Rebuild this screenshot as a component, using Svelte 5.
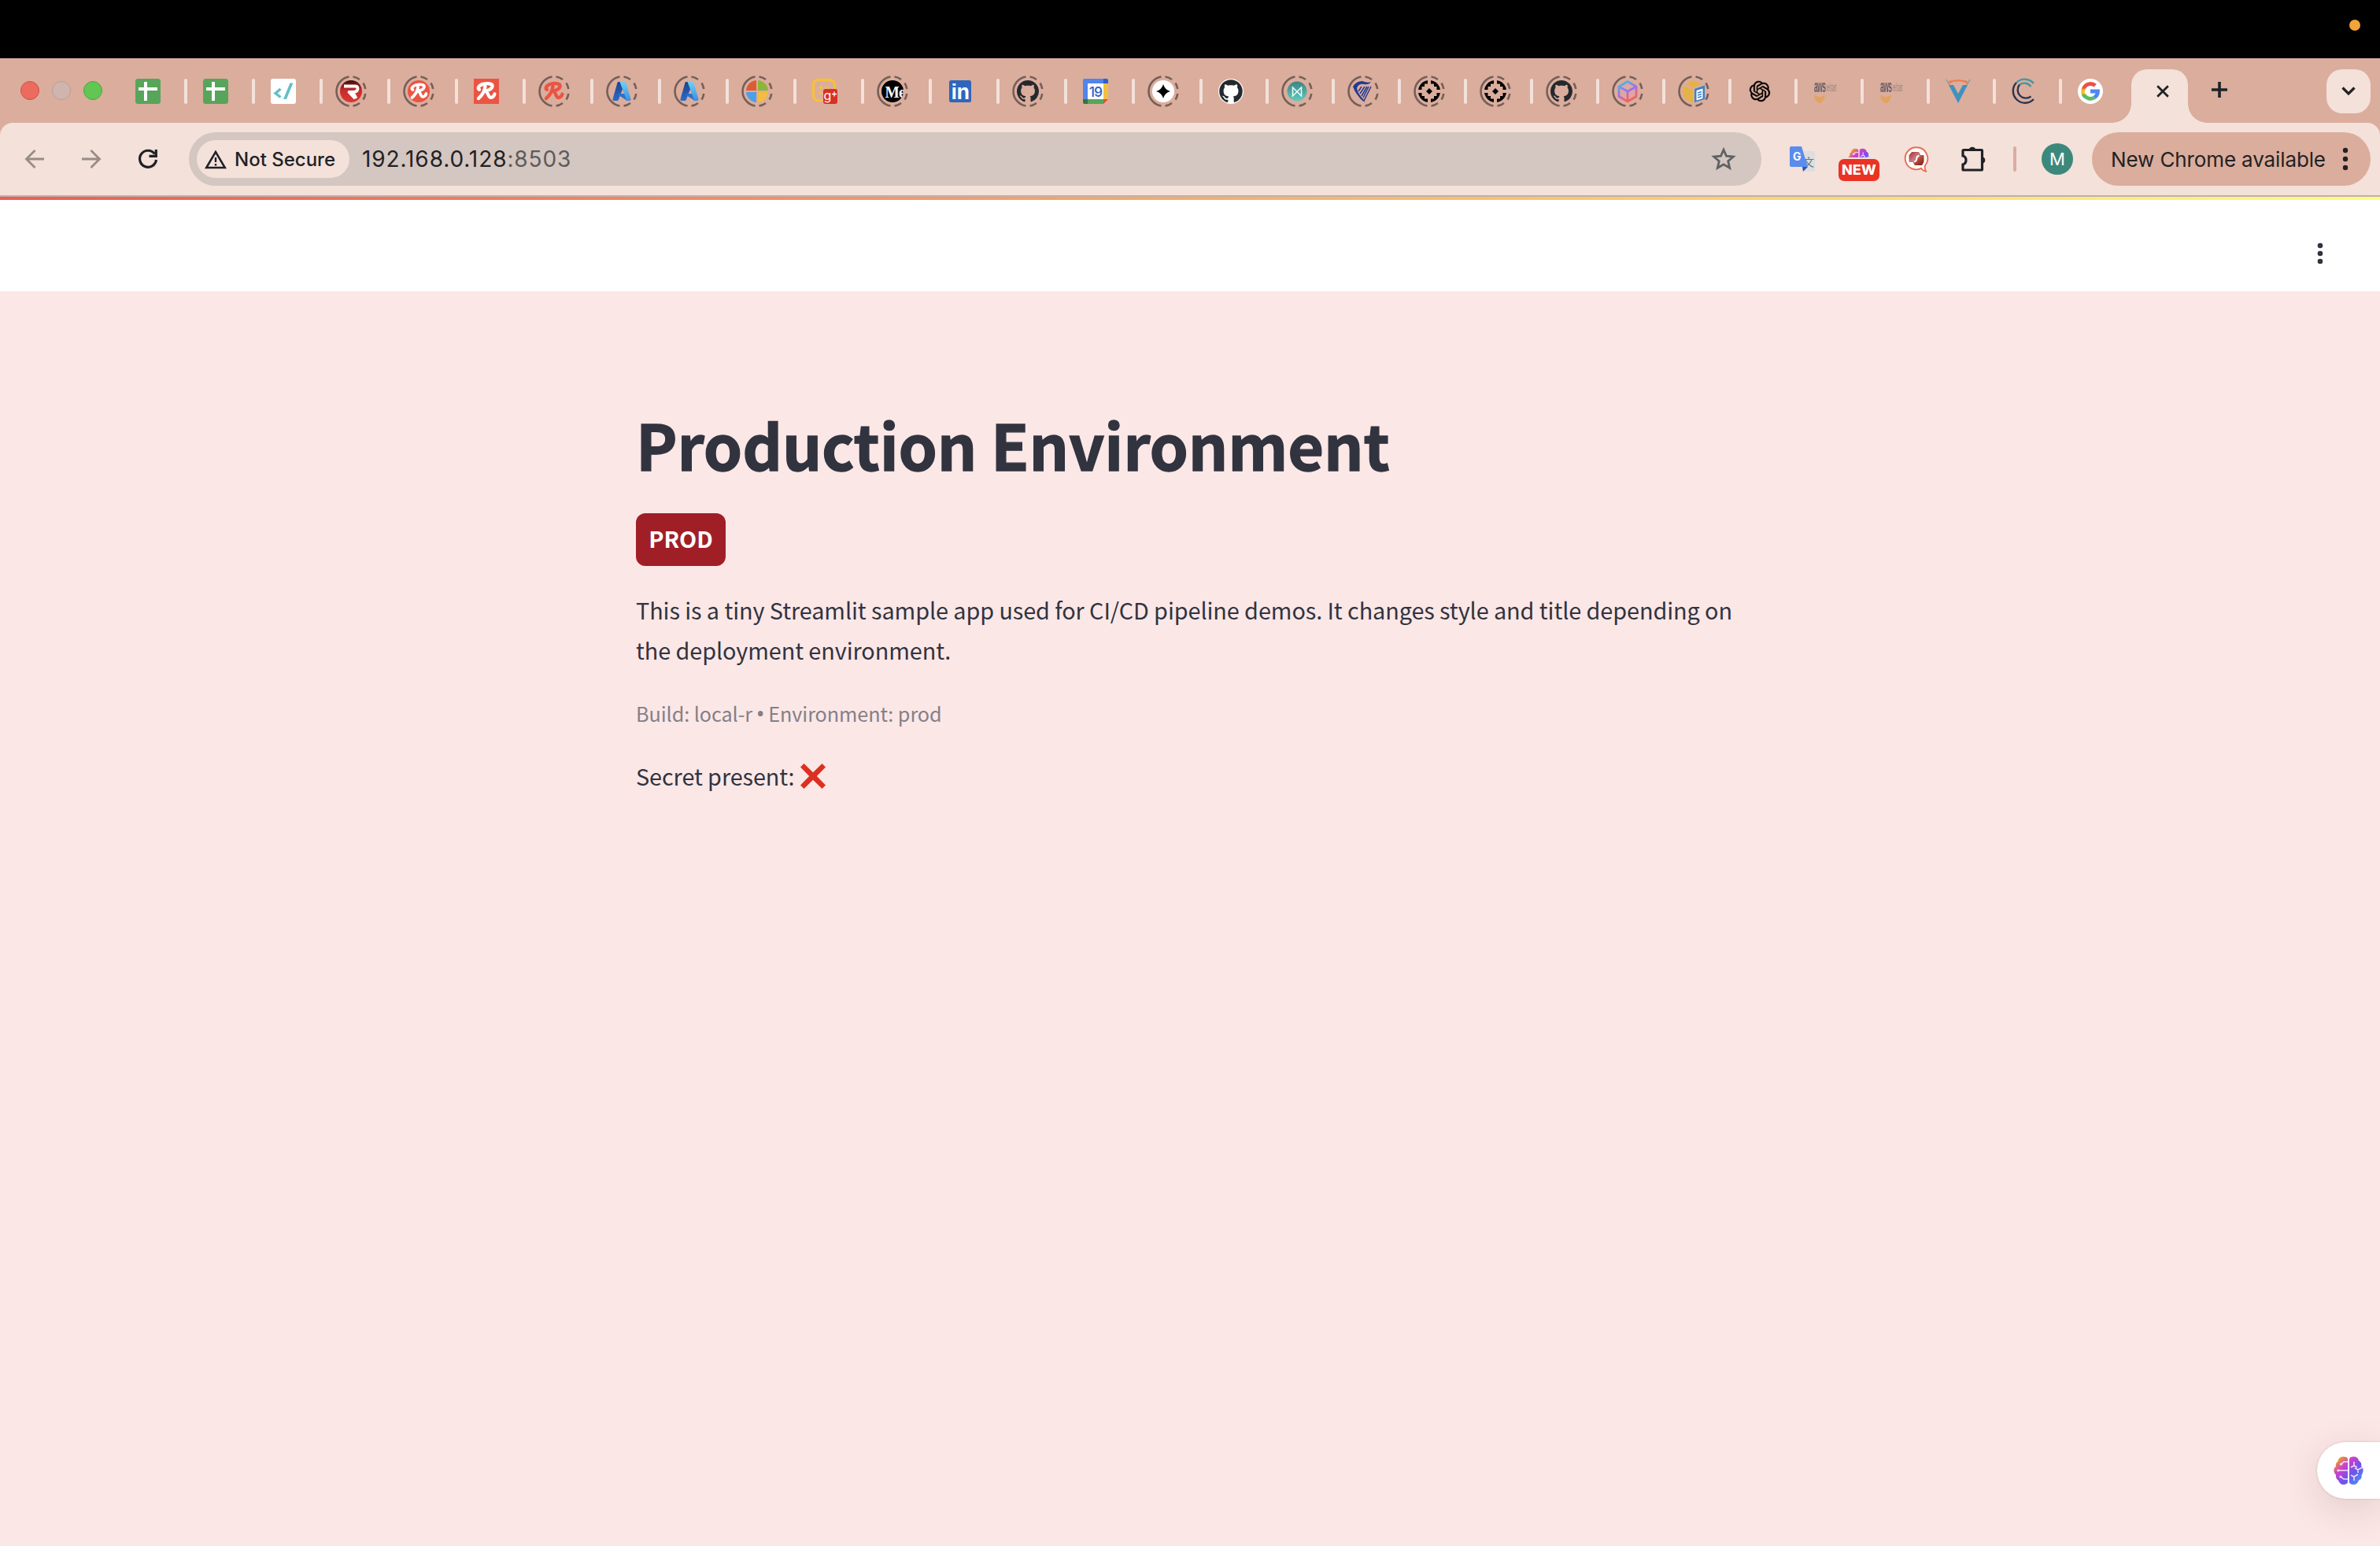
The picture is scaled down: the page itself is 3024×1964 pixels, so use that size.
<script>
  // Slots shrink by two pixels from the seventeenth tab onwards.
  const tabs = [
    ['sheets'], ['sheets'], ['code'], ['redr', 1], ['scriptCircle', 1], ['scriptSquare'],
    ['scriptPlain', 1], ['azure', 1], ['azure', 1], ['microsoft', 1], ['smile'], ['medium', 1],
    ['linkedin'], ['github', 1], ['calendar'], ['spark', 1], ['githubWhite'], ['teal', 1],
    ['harp', 1], ['target', 1], ['target', 1], ['github', 1], ['cube', 1], ['box', 1],
    ['openai'], ['aws'], ['aws'], ['vee'], ['cee'], ['google']
  ].map(([icon, ring], i) => ({ icon, ring, narrow: i > 15, last: i === 29 }));
  const octocat = 'M8 0C3.58 0 0 3.58 0 8c0 3.54 2.29 6.53 5.47 7.59.4.07.55-.17.55-.38 0-.19-.01-.82-.01-1.49-2.01.37-2.53-.49-2.69-.94-.09-.23-.48-.94-.82-1.13-.28-.15-.68-.52-.01-.53.63-.01 1.08.58 1.23.82.72 1.21 1.87.87 2.33.66.07-.52.28-.87.51-1.07-1.78-.2-3.64-.89-3.64-3.95 0-.87.31-1.59.82-2.15-.08-.2-.36-1.02.08-2.12 0 0 .67-.21 2.2.82.64-.18 1.32-.27 2-.27.68 0 1.36.09 2 .27 1.53-1.04 2.2-.82 2.2-.82.44 1.1.16 1.92.08 2.12.51.56.82 1.27.82 2.15 0 3.07-1.87 3.75-3.65 3.95.29.25.54.73.54 1.48 0 1.07-.01 1.93-.01 2.2 0 .21.15.46.55.38A8.013 8.013 0 0016 8c0-4.42-3.58-8-8-8z';
  const script = 'M12.500 18c-2.500-1-1-4.500 4-6 5.500-1.500 11-.5 10.500 2.500-.5 3-5 5-8.500 5 4 0 3.500 8 7 7.500 2-.5 3.500-2 4-4M19 14.500c-.5 5-3.500 10-7.500 13.500';
  const knot = 'M22.2819 9.8211a5.9847 5.9847 0 0 0-.5157-4.9108 6.0462 6.0462 0 0 0-6.5098-2.9A6.0651 6.0651 0 0 0 4.9807 4.1818a5.9847 5.9847 0 0 0-3.9977 2.9 6.0462 6.0462 0 0 0 .7427 7.0966 5.98 5.98 0 0 0 .511 4.9107 6.051 6.051 0 0 0 6.5146 2.9001A5.9847 5.9847 0 0 0 13.2599 24a6.0557 6.0557 0 0 0 5.7718-4.2058 5.9894 5.9894 0 0 0 3.9977-2.9001 6.0557 6.0557 0 0 0-.7475-7.0729zm-9.022 12.6081a4.4755 4.4755 0 0 1-2.8764-1.0408l.1419-.0804 4.7783-2.7582a.7948.7948 0 0 0 .3927-.6813v-6.7369l2.02 1.1686a.071.071 0 0 1 .038.052v5.5826a4.504 4.504 0 0 1-4.4945 4.4944zm-9.6607-4.1254a4.4708 4.4708 0 0 1-.5346-3.0137l.142.0852 4.783 2.7582a.7712.7712 0 0 0 .7806 0l5.8428-3.3685v2.3324a.0804.0804 0 0 1-.0332.0615L9.74 19.9502a4.4992 4.4992 0 0 1-6.1408-1.6464zM2.3408 7.8956a4.485 4.485 0 0 1 2.3655-1.9728V11.6a.7664.7664 0 0 0 .3879.6765l5.8144 3.3543-2.0201 1.1685a.0757.0757 0 0 1-.071 0l-4.8303-2.7865A4.504 4.504 0 0 1 2.3408 7.872zm16.5963 3.8558L13.1038 8.364 15.1192 7.2a.0757.0757 0 0 1 .071 0l4.8303 2.7913a4.4944 4.4944 0 0 1-.6765 8.1042v-5.6772a.79.79 0 0 0-.407-.667zm2.0107-3.0231l-.142-.0852-4.7735-2.7818a.7759.7759 0 0 0-.7854 0L9.409 9.2297V6.8974a.0662.0662 0 0 1 .0284-.0615l4.8303-2.7866a4.4992 4.4992 0 0 1 6.6802 4.66zM8.3065 12.863l-2.02-1.1638a.0804.0804 0 0 1-.038-.0567V6.0742a4.4992 4.4992 0 0 1 7.3757-3.4537l-.142.0805L8.704 5.459a.7948.7948 0 0 0-.3927.6813zm1.0976-2.3654l2.602-1.4998 2.6069 1.4998v2.9994l-2.5974 1.4997-2.6067-1.4997Z';
</script>

{#snippet brain(id)}
  <defs>
    <linearGradient id={id} x1="0" y1="0" x2="1" y2="1">
      <stop offset="0" stop-color="#f0a020" />
      <stop offset=".15" stop-color="#e8913f" />
      <stop offset=".35" stop-color="#cb3fd0" />
      <stop offset=".62" stop-color="#6a55ee" />
      <stop offset="1" stop-color="#3ea6f4" />
    </linearGradient>
  </defs>
  <path fill="url(#{id})" d="M18 3.5C18 1.5 15.500.5 12.500.5 8.500.5 6 3 5.500 6.500 3 8 2.500 11 3 13 .5 14.500 0 17 .5 19.500 1 22 2.500 23 3 23.500 2.500 27 4 29.500 6 30.500 7 34 9.500 36 12.500 36 16 36 18 34.500 18 33ZM20 3.500C20 1.500 22 .5 25 .5 29 .5 31.500 2.500 32 5.500 35 7 36 10 35 12.500 37.500 14.500 38.500 18 37 21 36.500 23 35.500 23.500 35.500 25 36 28 34 30 32 30.500 31 34 29 36 25.500 36 22 36 20 34.500 20 33Z" />
  <g fill="none" stroke="#f6dcff" stroke-width="1.500">
    <path d="M18 7h-5l-3 3M18 18H7M18 29h-5l-4-3M26 7v5m0 0-4 2m4-2 4 2M27 15l4 2m0 0v4m0-4 6-3M26 31v-5m0 0-4-2m4 2 5-3" />
  </g>
  <g fill="#f6dcff"><circle cx="9.500" cy="10" r="1.600" /><circle cx="6" cy="18" r="1.600" /><circle cx="9" cy="26" r="1.600" /></g>
{/snippet}

{#snippet favicon(kind)}
  {#if kind === 'sheets'}
    <rect x="4" y="4" width="32" height="32" rx="3.500" fill="#57a55a" />
    <path d="M8 17h24M17 8v24" stroke="#fff" stroke-width="4" />
  {:else if kind === 'code'}
    <rect x="4" y="4" width="32" height="32" rx="3" fill="#fff" />
    <path d="M16.500 17 10 22.500l6.500 5" fill="none" stroke="#63bfc6" stroke-width="3.400" />
    <path d="M20 30h4l8.500-20.500h-4z" fill="#63bfc6" />
  {:else if kind === 'redr'}
    <defs><linearGradient id="redr" x1="0" y1="0" x2="0" y2="1"><stop stop-color="#3a0d0d" /><stop offset=".45" stop-color="#c92a2b" /><stop offset="1" stop-color="#d83a36" /></linearGradient></defs>
    <circle cx="20" cy="20" r="14" fill="url(#redr)" />
    <path d="M11 13.500h14q3.500 0 3.500 3 0 4-5.500 4.500h-5.500l7.500 8M22.500 21.500l4 7.500" fill="none" stroke="#fff" stroke-width="3.800" stroke-linejoin="round" />
  {:else if kind === 'scriptCircle'}
    <circle cx="20" cy="20" r="14" fill="#eb5443" />
    <path class="ribbon" d={script} stroke="#fff" />
  {:else if kind === 'scriptSquare'}
    <rect x="4" y="4" width="32" height="32" fill="#eb5443" />
    <g transform="translate(-3.200 -2.800) scale(1.140)"><path class="ribbon" d={script} stroke="#fff" /></g>
  {:else if kind === 'scriptPlain'}
    <g transform="translate(-3.400 -3) scale(1.150)"><path class="ribbon" d={script} stroke="#eb5443" /></g>
  {:else if kind === 'azure'}
    <defs>
      <linearGradient id="az1" x1="0" y1="0" x2="0" y2="1"><stop stop-color="#1d4388" /><stop offset="1" stop-color="#2f6ac6" /></linearGradient>
      <linearGradient id="az2" x1="0" y1="0" x2="0" y2="1"><stop stop-color="#6fd0f6" /><stop offset="1" stop-color="#3f8ddd" /></linearGradient>
    </defs>
    <path d="M15.500 8h9L16 30.500q-.6 1.500-2 1.500H10q-2 0-1.500-2L14.500 9q.4-1 1-1z" fill="url(#az1)" />
    <path d="M15 23h9l3 9-11-7z" fill="#2a70d0" />
    <path d="M17.500 8h6.500q1.200 0 1.600 1.200L31.500 30q.5 2-1.500 2h-5q1-.8.5-2.300z" fill="url(#az2)" />
  {:else if kind === 'microsoft'}
    <path d="M19 6v13H6A14 14 0 0 1 19 6z" fill="#de5b34" />
    <path d="M21 6v13h13A14 14 0 0 0 21 6z" fill="#8bb638" />
    <path d="M19 34V21H6a14 14 0 0 0 13 13z" fill="#4ba1e8" />
    <path d="M21 34V21h13a14 14 0 0 1-13 13z" fill="#f5bb42" />
  {:else if kind === 'smile'}
    <rect x="5.500" y="5.500" width="27" height="26" rx="6" fill="none" stroke="#f5c03c" stroke-width="3.600" />
    <circle cx="15" cy="15" r="2.400" fill="#f5c03c" />
    <path d="M20 15.500h5M12 21q4 3 7 2" stroke="#f5c03c" stroke-width="2" fill="none" />
    <rect x="18" y="17" width="18" height="19" rx="3" fill="#d83024" />
    <text x="18.500" y="30.500" font-size="16" fill="#fff">g</text>
    <path d="M29 23.500h6M32 20.500v6" stroke="#fff" stroke-width="1.300" />
  {:else if kind === 'medium'}
    <clipPath id="disc"><circle cx="20" cy="20" r="14" /></clipPath>
    <circle cx="20" cy="20" r="14" fill="#000" />
    <g clip-path="url(#disc)"><g transform="translate(10.500 27.500) scale(.88 1)"><text font-size="22" font-weight="700" letter-spacing="-1" class="serif" fill="#fff">Me</text></g></g>
  {:else if kind === 'linkedin'}
    <rect x="6" y="6" width="28" height="28" rx="2.500" fill="#2e66bc" />
    <text x="8.500" y="30" font-size="27" font-weight="700" letter-spacing="-.5" class="sans" fill="#fff">in</text>
  {:else if kind === 'github'}
    <g transform="translate(6 6) scale(1.750)"><path d={octocat} fill="#24292e" /></g>
  {:else if kind === 'githubWhite'}
    <circle cx="20" cy="20" r="16" fill="#fff" />
    <g transform="translate(5.200 5.200) scale(1.850)"><path d={octocat} fill="#24292e" /></g>
  {:else if kind === 'calendar'}
    <path d="M6 4h24v6H10v20H4V6q0-2 2-2z" fill="#5184ec" />
    <path d="M30 4h4q2 0 2 2v4h-6z" fill="#2c60ca" />
    <path d="M30 10h6v20h-6z" fill="#f1bf42" />
    <path d="M10 30h20v6H10z" fill="#57a55b" />
    <path d="M4 30h6v6H6q-2 0-2-2z" fill="#33773c" />
    <path d="M30 30h6l-6 6z" fill="#d9503f" />
    <path d="M10 10h20v20H10z" fill="#fff" />
    <text x="20" y="26.500" font-size="17.500" font-weight="500" text-anchor="middle" letter-spacing="-.8" fill="#2c60ca">19</text>
  {:else if kind === 'spark'}
    <circle cx="20" cy="20" r="14" fill="#fff" />
    <path d="M20 11q2 7 9 9-7 2-9 9-2-7-9-9 7-2 9-9z" fill="#000" />
  {:else if kind === 'teal'}
    <defs><linearGradient id="teal" x1="0" y1="0" x2="0" y2="1"><stop stop-color="#3d8383" /><stop offset="1" stop-color="#63cbbc" /></linearGradient></defs>
    <circle cx="20" cy="20" r="12.500" fill="url(#teal)" />
    <path d="M14.500 26V15l5.500 5.500L25.500 15v11L20 20.500z" fill="none" stroke="#e8fffb" stroke-width="1.500" />
  {:else if kind === 'harp'}
    <path d="M7 14q4-7 12-7 7 3 11 1-3 4-9 3-7-1-9 5 1 7 9 15l1 3q-6-4-9-9-4-5-6-11z" fill="#223b92" />
    <path d="m18 14-4 6m8-6-6 9m9-9-7 12m9-12-7 14m10-14-9 18" stroke="#223b92" stroke-width="1.500" />
  {:else if kind === 'target'}
    <clipPath id="bounds"><circle cx="20" cy="20" r="14" /></clipPath>
    <path clip-path="url(#bounds)" d="M5 5h13v5.500h-4v3.500h-3.500v4H5zM22 5h13v13h-5.500v-4H26v-3.500h-4zM5 22h5.500v4H14v3.500h4V35H5zM35 22h-5.500v4H26v3.500h-4V35h13z" />
    <path d="M20 16l4 4-4 4-4-4z" />
  {:else if kind === 'cube'}
    <defs><linearGradient id="cube" x1=".3" y1="0" x2=".7" y2="1"><stop stop-color="#46b8e8" /><stop offset=".5" stop-color="#a56bea" /><stop offset=".75" stop-color="#ec5f83" /><stop offset="1" stop-color="#f2664e" /></linearGradient></defs>
    <path d="M20 7.500 31 14v12.500L20 33 9 26.500V14zM9 14l11 6 11-6M20 20v13" fill="#e59aaf55" stroke="url(#cube)" stroke-width="2.700" stroke-linejoin="round" />
  {:else if kind === 'box'}
    <path d="m10 10.500 10-4.500 10 4.500-10 5zM6 13l13 4v17Q6 31 6 20z" fill="#e4b247" />
    <path d="m21 17 13-4.500V30l-13 4z" fill="#3b82c8" />
    <path d="m23.500 19 8-2.500v12.500l-8 2.500z" fill="#fff" />
    <path d="m25 22 5-1.500m-5 4.500 5-1.500m-5 4.500 5-1.500" stroke="#3b82c8" stroke-width="1.500" />
  {:else if kind === 'openai'}
    <g transform="translate(6.900 6.900) scale(1.090)"><path d={knot} stroke="#000" stroke-width=".35" /></g>
  {:else if kind === 'aws'}
    <g class="smudge">
      <g transform="translate(5 20.500) scale(.47 1.250)"><text class="sans" font-size="18" font-weight="700" letter-spacing="-1" fill="#5b5260">aws</text></g>
      <g transform="translate(20.500 20) scale(.36 1.200)"><text class="sans" font-size="12.500" letter-spacing="-.4" fill="#94807e">re/start</text></g>
      <path d="M5.500 24.500q6.500 5 13 0v4q-3 6-6.500 7-5-3-6.500-6z" fill="#e5a159" />
    </g>
  {:else if kind === 'vee'}
    <path d="M5 5l4 7M35 5l-4 7" stroke="#7b9aab" stroke-width="1.300" />
    <path d="M8 12h6l6 11 6-11h6L20 35z" fill="#4091c0" />
    <path d="M9 8q11-3.500 22 0" fill="none" stroke="#eb7d4f" stroke-width="2" />
    <path d="m7 8.500 4-3v5zM33 8.500l-4-3v5z" fill="#eb7d4f" />
  {:else if kind === 'cee'}
    <g fill="none" stroke-width="2.400">
      <path d="M10 9A15 15 0 0 1 32 10M14 11.500A10.500 10.500 0 0 1 28.500 14" stroke="#4896a2" />
      <path d="M10 9a15 15 0 0 0 22 21M14 11.500a10.500 10.500 0 0 0 14.500 15" stroke="#2b3553" />
    </g>
  {:else if kind === 'google'}
    <circle cx="20" cy="20" r="16" fill="#fff" />
    <defs>
      <linearGradient id="gy" x1="0" y1="0" x2="0" y2="1"><stop stop-color="#ea4335" /><stop offset=".35" stop-color="#fbc02d" /><stop offset=".65" stop-color="#e0c528" /><stop offset="1" stop-color="#34a853" /></linearGradient>
    </defs>
    <g fill="none" stroke-width="4.800">
      <path d="M12.500 14.700A9.500 9.500 0 0 0 13 26.600" stroke="url(#gy)" />
      <path d="M12.200 15A9.500 9.500 0 0 1 26.300 12.700" stroke="#ea5248" />
      <path d="M12.200 25A9.500 9.500 0 0 0 25 28" stroke="#5abb63" />
      <path d="M20 20h9.500q0 5-4.500 8" stroke="#4d88f2" />
    </g>
  {/if}
{/snippet}

<div class="screen">
  <div class="menubar"><span class="recording"></span></div>

  <div class="tabstrip">
    <div class="lights"><i class="close"></i><i class="min"></i><i class="max"></i></div>
    <div class="tabs">
      {#each tabs as tab}
        <div class="tab" class:narrow={tab.narrow}>
          <svg width="40" height="40" viewBox="0 0 40 40">
            {#if tab.ring}
              <path class="ring" d="M17.500 1.500a18.700 18.700 0 0 0 0 37M22.500 1.500q4.500.5 8.500 3.500M35.500 9.500q2 3 2.800 7.500M38.300 23q-.8 4.500-2.800 7.500M31 35q-4 3-8.500 3.500" />
            {/if}
            {@render favicon(tab.icon)}
          </svg>
          {#if !tab.last}<span class="divider"></span>{/if}
        </div>
      {/each}
    </div>
    <div class="active">
      <svg width="16" height="16" viewBox="0 0 16 16"><path d="M1.200 1.200l13.600 13.600M14.800 1.200 1.200 14.800" class="ink" stroke-width="2.800" /></svg>
    </div>
    <svg class="plus" width="20" height="20" viewBox="0 0 20 20"><path d="M10 0v20M0 10h20" class="ink" stroke-width="3.600" /></svg>
    <div class="search"><svg width="18" height="12" viewBox="0 0 18 12"><path d="m1.500 1.500 7.500 7.500 7.500-7.500" class="ink" stroke-width="3.200" /></svg></div>
  </div>

  <div class="toolbar-back">
    <div class="toolbar">
      <div class="nav">
        <svg width="24" height="24" viewBox="0 0 24 24"><path d="M24 12H2M12.500 1 1.500 12l11 11" class="faded" /></svg>
        <svg width="24" height="24" viewBox="0 0 24 24"><path d="M0 12h22M11.500 1l11 11-11 11" class="faded" /></svg>
        <svg class="reload" width="26" height="26" viewBox="0 0 26 26"><path d="M21.500 6.500A10.500 10.500 0 1 0 23.500 14M23.300 1v8.300H14.500" class="ink" stroke-width="3.200" /></svg>
      </div>
      <div class="omnibox">
        <div class="chip">
          <svg width="28" height="25" viewBox="0 0 28 25"><path d="M2.200 23 14 3l11.800 20z" class="ink" stroke-width="2.500" /><path d="M14 10v6M14 18v2.500" class="ink" stroke-width="2.400" /></svg>
          <span>Not Secure</span>
        </div>
        <div class="url">192.168.0.128<span>:8503</span></div>
        <svg class="star" width="32" height="32" viewBox="0 0 32 32"><path d="m16 4.200 3.500 8 8.800.8-6.600 5.800 2 8.600-7.700-4.600-7.700 4.600 2-8.600-6.600-5.800 8.800-.8z" fill="none" stroke="#5f6162" stroke-width="2.800" /></svg>
      </div>
      <div class="extensions">
        <svg width="32" height="32" viewBox="0 0 32 32">
          <path d="M14 6h16q2 0 2 2v22q0 2-2 2H20z" fill="#dcdedf" />
          <text x="17" y="25" font-size="14" class="cjk" fill="#607985">文</text>
          <path d="M16 26h7l-6 6z" fill="#3252a8" />
          <path d="M2 0h13l8 26H2q-2 0-2-2V2q0-2 2-2z" fill="#5a8bee" />
          <text x="4" y="18" font-size="14" font-weight="700" fill="#fff">G</text>
        </svg>
        <div class="news">
          <svg width="28" height="28" viewBox="0 0 38 37">{@render brain('b1')}</svg>
          <span>NEW</span>
        </div>
        <svg width="32" height="34" viewBox="0 0 32 34">
          <defs><linearGradient id="rib" x1="0" y1="0" x2="1" y2="1"><stop stop-color="#9c3a31" /><stop offset=".45" stop-color="#cf7d88" /><stop offset=".6" stop-color="#b84a36" /><stop offset="1" stop-color="#74261f" /></linearGradient></defs>
          <path d="M16 2.300a14 14 0 1 0 6 26.500q3 4 6 3.700-2-3-1.200-7A14 14 0 0 0 16 2.300z" fill="#fff" stroke="#ea6a52" stroke-width="1.900" />
          <path d="M10 8.500h9l2 4h4v8l-2 4h-9l-2-4H7v-8z" fill="url(#rib)" stroke="url(#rib)" stroke-linejoin="round" />
          <path d="M19.500 13q-3 0-3.200 3.500t-3.500 4" fill="none" stroke="#fff" stroke-width="2" />
        </svg>
        <svg width="34" height="34" viewBox="0 0 34 34"><path d="M4 5.500h22.500q1 0 1 1V30q0 1-1 1H4q-1 0-1-1v-6q4-1 4-5.500T3 13V6.500q0-1 1-1z" class="ink" stroke-width="3.200" /><path d="M11 5a4.200 4.200 0 0 1 8 0zM28 14.500a4.200 4.200 0 0 1 0 8z" fill="#1f2225" stroke="#1f2225" /></svg>
        <span class="bar"></span>
      </div>
      <div class="avatar">M</div>
      <div class="update"><span>New Chrome available</span>
        <svg width="8" height="30" viewBox="0 0 8 30" fill="#1f2225"><circle cx="4" cy="4" r="3.200" /><circle cx="4" cy="15" r="3.200" /><circle cx="4" cy="26" r="3.200" /></svg>
      </div>
    </div>
  </div>

  <div class="app-header">
    <svg width="8" height="28" viewBox="0 0 8 28" fill="#31333f"><circle cx="4" cy="4" r="3.300" /><circle cx="4" cy="14" r="3.300" /><circle cx="4" cy="24" r="3.300" /></svg>
  </div>

  <main>
    <h1>Production Environment</h1>
    <div class="badge">PROD</div>
    <p class="intro">This is a tiny Streamlit sample app used for CI/CD pipeline demos. It changes style and title depending on<br />the deployment environment.</p>
    <p class="caption">Build: local-r <span class="bullet">•</span> Environment: prod</p>
    <p class="secret">Secret present:
      <svg width="34" height="34" viewBox="0 0 34 34"><path d="M1 5.500 5.500 1 17 12.200 28.500 1 33 5.500 21.800 17 33 28.500 28.500 33 17 21.800 5.500 33 1 28.500 12.200 17z" fill="#dc3020" /></svg>
    </p>
  </main>

  <div class="assistant"><svg width="38" height="37" viewBox="0 0 38 37">{@render brain('b2')}</svg></div>
</div>

<style>
  :global(body) { margin: 0; background: #fbe7e6; }
  .screen { position: relative; width: 3024px; height: 1964px; overflow: hidden; background: #fbe7e6; font-family: Inter, sans-serif; color: #1f2225; }
  .screen * { box-sizing: border-box; }
  svg { display: block; flex: none; overflow: visible; }
  .menubar { height: 74px; background: #000; display: flex; justify-content: flex-end; padding: 25px 25px 0 0; }
  .recording { width: 14px; height: 14px; border-radius: 50%; background: #f3a33c; }
  .tabstrip { height: 82px; background: #dbad9c; display: flex; align-items: flex-start; }
  .lights { width: 152px; display: flex; gap: 16px; padding: 29px 0 0 26px; flex: none; }
  .lights i { width: 24px; height: 24px; border-radius: 50%; border: 1.500px solid; }
  .close { background: #ec6b5f; border-color: #cf5145 !important; }
  .min { background: #cfb5ae; border-color: #b79e97 !important; }
  .max { background: #61c654; border-color: #4ba73e !important; }
  .tabs { display: flex; width: 2556px; flex: none; padding-top: 22px; }
  .tab { width: 86px; flex: none; display: flex; align-items: center; padding-left: 16px; height: 40px; }
  .tab.narrow { width: 84px; }
  .divider { width: 4px; height: 32px; border-radius: 2px; background: #f3e1da; margin-left: auto; }
  .ring { fill: none; stroke: #755f59; stroke-width: 2.600; }
  .ribbon { fill: none; stroke-width: 3.700; stroke-linecap: round; stroke-linejoin: round; }
  .serif { font-family: "Liberation Serif", serif; }
  .sans { font-family: "Liberation Sans", sans-serif; }
  .cjk { font-family: "Noto Sans CJK SC", sans-serif; }
  .smudge { filter: blur(.4px); opacity: .9; }
  .ink { fill: none; stroke: #1f2225; }
  .faded { fill: none; stroke: #978c88; stroke-width: 2.800; }
  .active { position: relative; width: 72px; height: 68px; margin-top: 14px; border-radius: 20px 20px 0 0; background: #f3e1da; padding: 20px 0 0 32px; flex: none; }
  .active::before, .active::after { content: ''; position: absolute; bottom: 0; width: 24px; height: 24px; }
  .active::before { right: 100%; background: radial-gradient(circle at 0 0, transparent 23.500px, #f3e1da 24px); }
  .active::after { left: 100%; background: radial-gradient(circle at 100% 0, transparent 23.500px, #f3e1da 24px); }
  .plus { margin: 30px 0 0 30px; }
  .search { margin: 14px 12px 0 auto; width: 56px; height: 56px; border-radius: 20px; background: #f3e1da; display: flex; align-items: center; justify-content: center; }
  .toolbar-back { background: #dbad9c; }
  .toolbar { height: 94px; background: #f3e1da; border-radius: 16px 16px 0 0; border-bottom: 2px solid #bcb1ae; display: flex; align-items: center; padding-right: 12px; }
  .nav { width: 240px; display: flex; gap: 48px; padding-left: 32px; align-items: center; flex: none; }
  .reload { margin-left: -1px; }
  .omnibox { width: 1998px; height: 68px; border-radius: 34px; background: #d4c6c0; display: flex; align-items: center; padding: 0 32px 0 10px; flex: none; }
  .chip { width: 194px; height: 48px; border-radius: 24px; background: #f3e1da; display: flex; align-items: center; gap: 10px; padding-left: 10px; font-size: 24px; font-weight: 500; white-space: nowrap; }
  .url { margin-left: 16px; font-size: 28px; letter-spacing: .9px; }
  .url span { color: #5d5b5a; }
  .star { margin-left: auto; }
  .extensions { display: flex; align-items: center; padding-left: 36px; width: 356px; flex: none; }
  .news { position: relative; width: 52px; height: 56px; margin: 0 31px 0 30px; padding: 14px 0 0 12px; }
  .news span { position: absolute; left: 0; top: 28px; width: 52px; height: 28px; border-radius: 7px; background: #ea3323; color: #fff; font-size: 18px; line-height: 28px; font-weight: 800; text-align: center; box-shadow: 0 -2px 0 #f3e1da; }
  .extensions > svg:nth-of-type(3) { margin-left: 40px; }
  .bar { width: 4px; height: 32px; border-radius: 2px; background: #dbad9c; margin-left: 33px; }
  .avatar { width: 40px; height: 40px; border-radius: 50%; background: #3c897c; color: #fff; font-size: 22px; line-height: 40px; text-align: center; flex: none; }
  .update { margin-left: auto; width: 354px; height: 68px; border-radius: 34px; background: #dbad9c; font-size: 26px; letter-spacing: -.12px; display: flex; align-items: center; justify-content: space-between; padding: 0 28px 0 24px; white-space: nowrap; }
  .app-header { height: 120px; background: linear-gradient(90deg, #ee5c55, #fffd80) top / 100% 4px no-repeat #fff; display: flex; justify-content: flex-end; padding: 58px 72px 0 0; }
  main { width: 1408px; margin: 0 auto; padding-top: 141px; font-family: "Noto Sans CJK SC", sans-serif; color: #31333f; font-size: 28.800px; line-height: 51.200px; letter-spacing: -.07px; }
  h1 { margin: 0; font-size: 79px; line-height: 106px; font-weight: 700; white-space: nowrap; letter-spacing: -.16px; -webkit-text-stroke: 1.300px #31333f; }
  .badge { width: 114px; height: 67px; margin-top: 35px; border-radius: 12px; background: #a01f27; color: #fff; font-weight: 700; line-height: 63px; text-align: center; }
  p { margin: 0; white-space: nowrap; }
  .intro { margin-top: 30px; }
  .caption { margin-top: 33px; font-size: 25.200px; line-height: 44.800px; color: #857f86; }
  .bullet { display: inline-block; width: 9px; font-family: "Open Sans", sans-serif; font-size: 30px; line-height: 1; text-indent: -1px; }
  .secret { margin-top: 31px; display: flex; align-items: center; gap: 6px; }
  .assistant { position: absolute; right: 0; top: 1832px; width: 80px; height: 72px; border-radius: 36px 0 0 36px; background: #fff; box-shadow: 0 12px 48px rgba(80, 40, 40, .14), 0 0 3px rgba(80, 40, 40, .2); padding: 18px 0 0 21px; }
</style>
